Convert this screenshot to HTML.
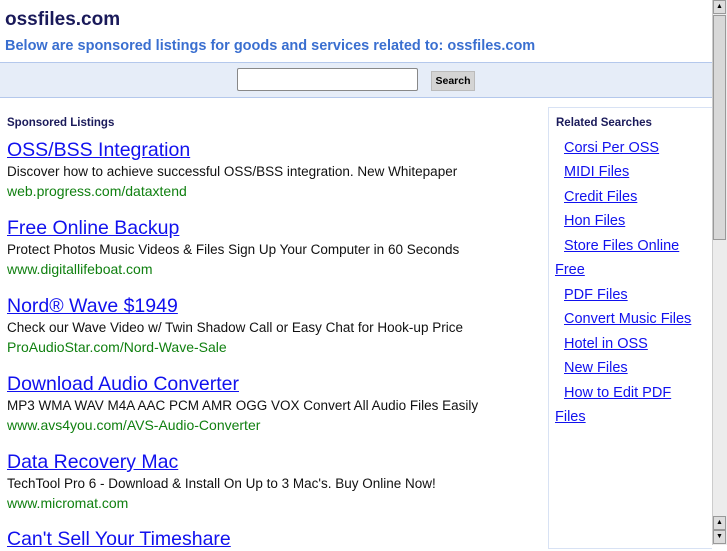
<!DOCTYPE html><html><head><style>
body{margin:0;width:727px;height:545px;overflow:hidden;background:#fff;font-family:"Liberation Sans",sans-serif;position:relative}
.a{position:absolute;white-space:nowrap}
a{color:#1111ee;text-decoration:underline}
.t{font-size:19.5px;left:7px}
.d{font-size:13.5px;left:7px;color:#111}
.u{font-size:14px;left:7px;color:#108010}
.r{font-size:14.5px;left:564px}
</style></head><body>
<div class="a" style="left:5px;top:9px;font-size:19px;font-weight:bold;color:#1a1a5a">ossfiles.com</div>
<div class="a" style="left:5px;top:38px;font-size:14.5px;font-weight:bold;color:#3a6fd0">Below are sponsored listings for goods and services related to: ossfiles.com</div>
<div class="a" style="left:0;top:62px;width:712px;height:34px;background:#e6edf8;border-top:1px solid #b4c8ec;border-bottom:1px solid #b4c8ec"></div>
<div class="a" style="left:237px;top:68px;width:179px;height:21px;background:#fff;border:1px solid #888;border-radius:2px"></div>
<div class="a" style="left:431px;top:71px;width:44px;height:20px;background:#d4d4d4;border:1px solid #bbb;font-size:10.5px;font-weight:bold;text-align:center;line-height:19px;box-sizing:border-box">Search</div>
<div class="a" style="left:7px;top:117px;font-size:11.5px;font-weight:bold;color:#1a1a5a">Sponsored Listings</div>

<div class="a t" style="top:139px"><a>OSS/BSS Integration</a></div>
<div class="a d" style="top:164px">Discover how to achieve successful OSS/BSS integration. New Whitepaper</div>
<div class="a u" style="top:183px">web.progress.com/dataxtend</div>
<div class="a t" style="top:217px"><a>Free Online Backup</a></div>
<div class="a d" style="top:242px">Protect Photos Music Videos &amp; Files Sign Up Your Computer in 60 Seconds</div>
<div class="a u" style="top:261px">www.digitallifeboat.com</div>
<div class="a t" style="top:295px"><a>Nord® Wave $1949</a></div>
<div class="a d" style="top:320px">Check our Wave Video w/ Twin Shadow Call or Easy Chat for Hook-up Price</div>
<div class="a u" style="top:339px">ProAudioStar.com/Nord-Wave-Sale</div>
<div class="a t" style="top:373px"><a>Download Audio Converter</a></div>
<div class="a d" style="top:398px">MP3 WMA WAV M4A AAC PCM AMR OGG VOX Convert All Audio Files Easily</div>
<div class="a u" style="top:417px">www.avs4you.com/AVS-Audio-Converter</div>
<div class="a t" style="top:451px"><a>Data Recovery Mac</a></div>
<div class="a d" style="top:476px">TechTool Pro 6 - Download &amp; Install On Up to 3 Mac's. Buy Online Now!</div>
<div class="a u" style="top:495px">www.micromat.com</div>
<div class="a t" style="top:528px"><a>Can't Sell Your Timeshare</a></div>

<div class="a" style="left:548px;top:107px;width:163px;height:440px;border:1px solid #d8e2f4;border-right:none"></div>
<div class="a" style="left:556px;top:117px;font-size:11.5px;font-weight:bold;color:#1a1a5a">Related Searches</div>
<div class="a r" style="top:140px"><a>Corsi Per OSS</a></div>
<div class="a r" style="top:164px"><a>MIDI Files</a></div>
<div class="a r" style="top:189px"><a>Credit Files</a></div>
<div class="a r" style="top:213px"><a>Hon Files</a></div>
<div class="a r" style="top:238px"><a>Store Files Online</a></div>
<div class="a r" style="top:262px;left:555px"><a>Free</a></div>
<div class="a r" style="top:287px"><a>PDF Files</a></div>
<div class="a r" style="top:311px"><a>Convert Music Files</a></div>
<div class="a r" style="top:336px"><a>Hotel in OSS</a></div>
<div class="a r" style="top:360px"><a>New Files</a></div>
<div class="a r" style="top:385px"><a>How to Edit PDF</a></div>
<div class="a r" style="top:409px;left:555px"><a>Files</a></div>

<div class="a" style="left:712px;top:0;width:15px;height:545px;background:#ececec;border-left:1px solid #ccc"></div>
<div class="a" style="left:713px;top:0;width:13px;height:14px;background:#ddd;border:1px solid #999;box-sizing:border-box;font-size:7px;text-align:center;line-height:12px">▲</div>
<div class="a" style="left:713px;top:15px;width:13px;height:225px;background:#d8d8d8;border:1px solid #999;box-sizing:border-box"></div>
<div class="a" style="left:713px;top:516px;width:13px;height:14px;background:#ddd;border:1px solid #999;box-sizing:border-box;font-size:7px;text-align:center;line-height:12px">▲</div>
<div class="a" style="left:713px;top:530px;width:13px;height:14px;background:#ddd;border:1px solid #999;box-sizing:border-box;font-size:7px;text-align:center;line-height:12px">▼</div>
</body></html>
